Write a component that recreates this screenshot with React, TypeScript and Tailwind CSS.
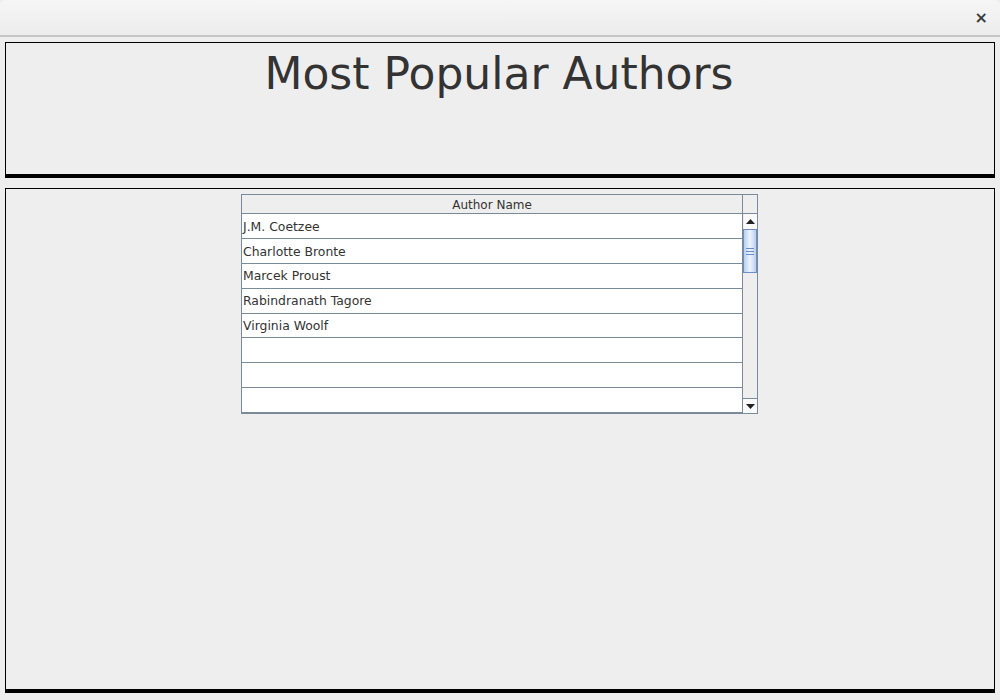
import React from "react";

const authors = ["J.M. Coetzee", "Charlotte Bronte", "Marcek Proust", "Rabindranath Tagore", "Virginia Woolf", "", "", ""];

export default function App() {
  return (
    <div className="w-[1000px] h-[700px] bg-[#eeeeee] flex flex-col overflow-hidden" style={{ fontFamily: '"DejaVu Sans", sans-serif' }}>
      {/* title bar */}
      <div className="h-[37px] shrink-0 flex items-center justify-end pr-[12px] bg-gradient-to-b from-[#f6f6f6] to-[#ececec] border-b-2 border-[#c6c6c6] rounded-t-[6px]">
        <span className="text-[16px] font-bold text-[#3a3a3a] leading-none">×</span>
      </div>
      <div className="flex flex-col px-[5px] pt-[5px]">
        {/* header panel */}
        <div className="h-[136px] border-t border-l border-r border-black border-b-[4px] flex justify-center">
          <h1 className="text-[44px] leading-none text-[#333333] mt-[9px] ml-[-2px]">Most Popular Authors</h1>
        </div>
        {/* content panel */}
        <div className="mt-[10px] h-[505px] border-t border-l border-r border-black border-b-[4px] flex justify-center pt-[5px]">
          <div className="w-[517px] h-[220px] flex border border-[#7a8a99] bg-white self-start mr-[1px]">
            <div className="flex-1 flex flex-col">
              <div className="h-[19px] bg-[#eeeeee] border-b border-[#7a8a99] flex items-center justify-center text-[12px] text-[#333333] pt-[1px]">Author Name</div>
              {authors.map((a, i) => (
                <div key={i} className="h-[25px] border-b border-[#7a8a99] flex items-center pl-[1px] pt-[2px] text-[12.4px] text-[#333333] bg-white">
                  {a}
                </div>
              ))}
            </div>
            {/* scrollbar */}
            <div className="w-[15px] border-l border-[#7a8a99] flex flex-col bg-[#eeeeee]">
              <div className="h-[19px] border-b border-[#7a8a99] bg-[#eeeeee]" />
              <div className="h-[15px] bg-[#fafafa] flex items-center justify-center border-l border-[#eeeeee]">
                <svg width="9" height="5" viewBox="0 0 9 5"><path d="M0 5 L4.5 0 L9 5 Z" fill="#222" /></svg>
              </div>
              <div className="h-[44px] border border-[#6d8ec4] bg-gradient-to-r from-[#b8cff0] via-[#eef4fc] to-[#b8cff0] flex flex-col items-center justify-center gap-[2px]">
                <div className="w-[8px] h-[1px] bg-[#6d8ec4]" />
                <div className="w-[8px] h-[1px] bg-[#6d8ec4]" />
                <div className="w-[8px] h-[1px] bg-[#6d8ec4]" />
              </div>
              <div className="flex-1 bg-[#eeeeee] border-b border-[#7a8a99]" />
              <div className="h-[14px] bg-[#fafafa] flex items-center justify-center">
                <svg width="9" height="5" viewBox="0 0 9 5"><path d="M0 0 L4.5 5 L9 0 Z" fill="#222" /></svg>
              </div>
            </div>
          </div>
        </div>
      </div>
    </div>
  );
}
